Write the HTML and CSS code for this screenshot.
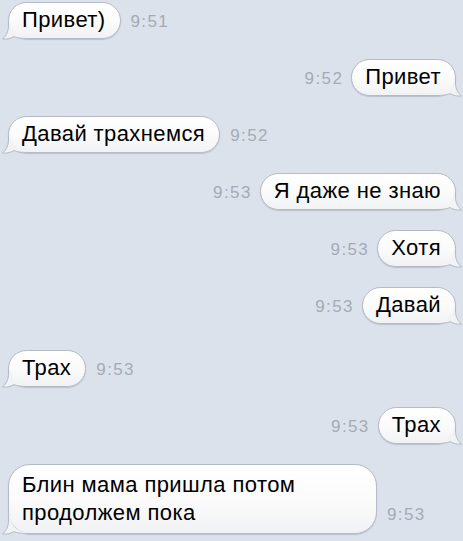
FILE: index.html
```html
<!DOCTYPE html>
<html lang="ru">
<head>
<meta charset="utf-8">
<title>Сообщения</title>
<link rel="stylesheet" href="styles.css">
</head>
<body>
<main class="chat">
  <div class="row in">
    <div class="bubble">Привет)<svg class="tail" width="28" height="22" viewBox="0 0 28 22"><path class="tail-fill" d="M7.5 2.5 L7.5 8 C7.5 14 5 18 1.5 21 C6 21.5 10 20.5 13 18.5 C16 20 20 20.5 28 20.5 L28 19 L25.5 19 A16.5 16.5 0 0 1 9 2.5 Z"/><path class="tail-line" d="M7.5 2.5 L7.5 8 C7.5 14 5 18 1.5 21 C6 21.5 10 20.5 13 18.5 C16 20 20 20.5 28 20.5"/></svg></div>
    <span class="time">9:51</span>
  </div>
  <div class="row out">
    <span class="time">9:52</span>
    <div class="bubble">Привет<svg class="tail" width="28" height="22" viewBox="0 0 28 22"><path class="tail-fill" d="M7.5 2.5 L7.5 8 C7.5 14 5 18 1.5 21 C6 21.5 10 20.5 13 18.5 C16 20 20 20.5 28 20.5 L28 19 L25.5 19 A16.5 16.5 0 0 1 9 2.5 Z"/><path class="tail-line" d="M7.5 2.5 L7.5 8 C7.5 14 5 18 1.5 21 C6 21.5 10 20.5 13 18.5 C16 20 20 20.5 28 20.5"/></svg></div>
  </div>
  <div class="row in">
    <div class="bubble">Давай трахнемся<svg class="tail" width="28" height="22" viewBox="0 0 28 22"><path class="tail-fill" d="M7.5 2.5 L7.5 8 C7.5 14 5 18 1.5 21 C6 21.5 10 20.5 13 18.5 C16 20 20 20.5 28 20.5 L28 19 L25.5 19 A16.5 16.5 0 0 1 9 2.5 Z"/><path class="tail-line" d="M7.5 2.5 L7.5 8 C7.5 14 5 18 1.5 21 C6 21.5 10 20.5 13 18.5 C16 20 20 20.5 28 20.5"/></svg></div>
    <span class="time">9:52</span>
  </div>
  <div class="row out">
    <span class="time">9:53</span>
    <div class="bubble">Я даже не знаю<svg class="tail" width="28" height="22" viewBox="0 0 28 22"><path class="tail-fill" d="M7.5 2.5 L7.5 8 C7.5 14 5 18 1.5 21 C6 21.5 10 20.5 13 18.5 C16 20 20 20.5 28 20.5 L28 19 L25.5 19 A16.5 16.5 0 0 1 9 2.5 Z"/><path class="tail-line" d="M7.5 2.5 L7.5 8 C7.5 14 5 18 1.5 21 C6 21.5 10 20.5 13 18.5 C16 20 20 20.5 28 20.5"/></svg></div>
  </div>
  <div class="row out">
    <span class="time">9:53</span>
    <div class="bubble">Хотя<svg class="tail" width="28" height="22" viewBox="0 0 28 22"><path class="tail-fill" d="M7.5 2.5 L7.5 8 C7.5 14 5 18 1.5 21 C6 21.5 10 20.5 13 18.5 C16 20 20 20.5 28 20.5 L28 19 L25.5 19 A16.5 16.5 0 0 1 9 2.5 Z"/><path class="tail-line" d="M7.5 2.5 L7.5 8 C7.5 14 5 18 1.5 21 C6 21.5 10 20.5 13 18.5 C16 20 20 20.5 28 20.5"/></svg></div>
  </div>
  <div class="row out">
    <span class="time">9:53</span>
    <div class="bubble">Давай<svg class="tail" width="28" height="22" viewBox="0 0 28 22"><path class="tail-fill" d="M7.5 2.5 L7.5 8 C7.5 14 5 18 1.5 21 C6 21.5 10 20.5 13 18.5 C16 20 20 20.5 28 20.5 L28 19 L25.5 19 A16.5 16.5 0 0 1 9 2.5 Z"/><path class="tail-line" d="M7.5 2.5 L7.5 8 C7.5 14 5 18 1.5 21 C6 21.5 10 20.5 13 18.5 C16 20 20 20.5 28 20.5"/></svg></div>
  </div>
  <div class="row in spaced">
    <div class="bubble">Трах<svg class="tail" width="28" height="22" viewBox="0 0 28 22"><path class="tail-fill" d="M7.5 2.5 L7.5 8 C7.5 14 5 18 1.5 21 C6 21.5 10 20.5 13 18.5 C16 20 20 20.5 28 20.5 L28 19 L25.5 19 A16.5 16.5 0 0 1 9 2.5 Z"/><path class="tail-line" d="M7.5 2.5 L7.5 8 C7.5 14 5 18 1.5 21 C6 21.5 10 20.5 13 18.5 C16 20 20 20.5 28 20.5"/></svg></div>
    <span class="time">9:53</span>
  </div>
  <div class="row out">
    <span class="time">9:53</span>
    <div class="bubble">Трах<svg class="tail" width="28" height="22" viewBox="0 0 28 22"><path class="tail-fill" d="M7.5 2.5 L7.5 8 C7.5 14 5 18 1.5 21 C6 21.5 10 20.5 13 18.5 C16 20 20 20.5 28 20.5 L28 19 L25.5 19 A16.5 16.5 0 0 1 9 2.5 Z"/><path class="tail-line" d="M7.5 2.5 L7.5 8 C7.5 14 5 18 1.5 21 C6 21.5 10 20.5 13 18.5 C16 20 20 20.5 28 20.5"/></svg></div>
  </div>
  <div class="row in">
    <div class="bubble multi">Блин мама пришла потом продолжем пока<svg class="tail" width="28" height="22" viewBox="0 0 28 22"><path class="tail-fill" d="M7.5 2.5 L7.5 8 C7.5 14 5 18 1.5 21 C6 21.5 10 20.5 13 18.5 C16 20 20 20.5 28 20.5 L28 19 L25.5 19 A16.5 16.5 0 0 1 9 2.5 Z"/><path class="tail-line" d="M7.5 2.5 L7.5 8 C7.5 14 5 18 1.5 21 C6 21.5 10 20.5 13 18.5 C16 20 20 20.5 28 20.5"/></svg></div>
    <span class="time">9:53</span>
  </div>
</main>
</body>
</html>
```
FILE: styles.css
```css
html, body {
  margin: 0;
  padding: 0;
  background: #dce2eb;
}

body {
  font-family: "Liberation Sans", Arial, Helvetica, sans-serif;
  color: #000;
}

.chat {
  display: flex;
  flex-direction: column;
  gap: 20px;
  padding: 2px 7px 0 8px;
  width: 463px;
  height: 541px;
  box-sizing: border-box;
  overflow: hidden;
}

.row {
  display: flex;
  align-items: last baseline;
  gap: 10px;
}

.row.in {
  justify-content: flex-start;
}

.row.out {
  justify-content: flex-end;
  gap: 8px;
}

.row.spaced {
  margin-top: 6px;
}

.bubble {
  position: relative;
  font-size: 22px;
  letter-spacing: 0.4px;
  line-height: 28px;
  padding: 3px 14px 4px 13px;
  border: 1px solid #b4bbc6;
  border-radius: 19px;
  background: linear-gradient(#ffffff 0%, #fbfbfb 50%, #f1f2f4 100%);
  box-shadow: 0 1px 1px rgba(80, 90, 110, 0.25);
  max-width: 369px;
  box-sizing: border-box;
}

.bubble.multi {
  padding: 6px 14px 6px 13px;
  border-radius: 22px;
}

.tail {
  position: absolute;
  left: -8px;
  bottom: -2px;
  overflow: visible;
}

.row.out .tail {
  left: auto;
  right: -8px;
  transform: scaleX(-1);
}

.tail-fill {
  fill: #f2f3f5;
}

.tail-line {
  fill: none;
  stroke: #b4bbc6;
  stroke-width: 1;
}

.time {
  font-size: 17px;
  color: #a5abb6;
  letter-spacing: 1.4px;
}
```
